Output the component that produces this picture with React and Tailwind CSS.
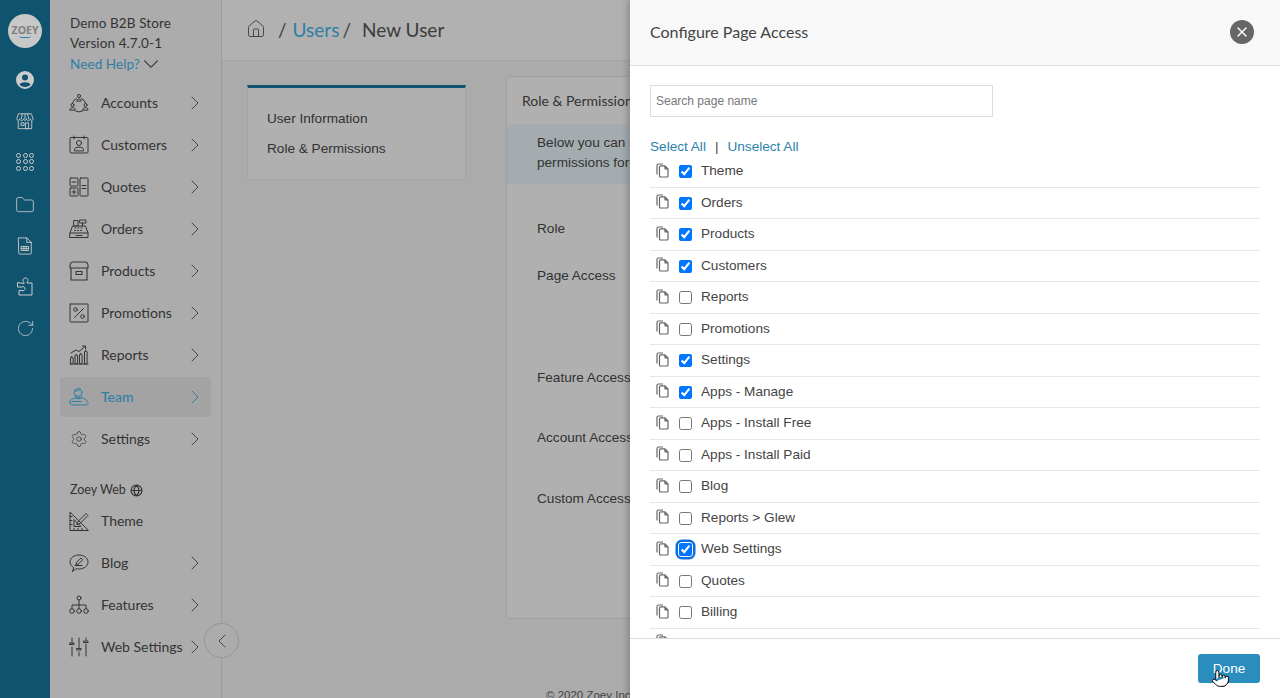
import React from 'react';
import { ChevronRight, ChevronDown, ChevronLeft, House, Folder, RotateCw, X, Settings as Gear, Pointer } from 'lucide-react';

const nav = "font-['Lato','Open_Sans',sans-serif]";

const Ico = ({ children, size = 20, className = '', strokeWidth = 1 }) => (
  <svg width={size} height={size} viewBox="0 0 20 20" fill="none" stroke="currentColor" strokeWidth={strokeWidth} strokeLinecap="round" strokeLinejoin="round" className={className}>
    {children}
  </svg>
);

const iconos = {
  accounts: <Ico><circle cx="10" cy="3" r="1.6" /><path d="M8 7.500c0-2 4-2 4 0v.6H8z" /><circle cx="3.500" cy="12" r="1.500" /><path d="M1 16.500c0-2.600 5-2.600 5 0v.6H1z" /><circle cx="16.500" cy="12" r="1.500" /><path d="M14 16.500c0-2.600 5-2.600 5 0v.6h-5z" /><path d="M7.500 5.500a7 7 0 0 0-4 4.400M12.500 5.500a7 7 0 0 1 4 4.400M6.500 18a7 7 0 0 0 7 0" /></Ico>,
  customers: <Ico><rect x="1" y="2.500" width="18" height="15.500" rx="1" /><path d="M5 1v3M15 1v3" /><circle cx="10" cy="8" r="2.500" /><path d="M5.500 15.500v-1c0-1.500 2-2.300 4.500-2.300s4.500.8 4.500 2.300v1z" /></Ico>,
  quotes: <Ico><rect x="1" y="1" width="8" height="8" rx=".8" /><rect x="1" y="11" width="8" height="8" rx=".8" /><rect x="11" y="1" width="8" height="18" rx=".8" /><path d="M3 5h4M3 15h4M5 13v4M13 8.500h4M13 11.500h4" /></Ico>,
  orders: <Ico><path d="M1 14 3.500 7h13L19 14v4.500H1zM1 14h18" /><rect x="5" y="1.500" width="4" height="5.500" /><rect x="11" y="1" width="6" height="3" /><path d="M13.500 4v3M6 9h1M9 9h1M12 9h1M5.500 11.500h1M8.500 11.500h1M11.500 11.500h1M7 16.500h6" /></Ico>,
  products: <Ico strokeWidth={1.100}><path d="M1 7V4.500C1 2.500 2.500 1 4.500 1h11C17.500 1 19 2.500 19 4.500V7zM2 7v12h16V7" /><path d="M7 10.500h6v3H7z" /></Ico>,
  promotions: <Ico><rect x="1" y="1" width="18" height="18" rx=".6" /><path d="m5.500 14.500 9-9" /><circle cx="6.500" cy="6.500" r="1.800" /><circle cx="13.500" cy="13.500" r="1.800" /></Ico>,
  reports: <Ico><path d="M1 19h18" /><rect x="1.500" y="12" width="2.600" height="7" rx="1" /><rect x="6" y="10" width="2.600" height="9" rx="1" /><rect x="10.500" y="9" width="2.600" height="10" rx="1" /><rect x="15.500" y="6" width="2.600" height="13" rx="1" /><path d="m2 8 5-3 3 1.500L16 1.500M13.500 1H16.500V4" /></Ico>,
  team: <Ico><circle cx="9" cy="5.500" r="3.800" /><path d="M5.500 3.500C8 4.500 10 4 11 1.800M6 9.500c2 1.500 5 1.500 7 0" /><path d="M1 15c0-2.500 3-3.500 6-4 1.500 1 4 1 5.500 0 3 .5 6.500 2 6.500 5.500 0 1-1 1.500-2 1.500H5c-2.500 0-4-1-4-3z" /><path d="M3.500 14.500h9" /></Ico>,
  theme: <Ico size={21}><path d="M1 1v18h18z" /><path d="M5 8.500V15h6.500z" /><path d="M1 5h2M1 9h2M1 13h2M5 19v-2M9 19v-2M13 19v-2" /><path d="m9 10 8-8 2 2-8 8-3 1z" /></Ico>,
  blog: <Ico><path d="M4.500 14.500C2.500 13.300 1 11.300 1 9c0-4 4-7 9-7s9 3 9 7-4 7-9 7c-1 0-2-.1-2.800-.4L3.500 18.500z" /><path d="m7 11.500.6-2.300L12 5l1.800 1.800L9.300 11z" /><path d="M6 12.500h7" /></Ico>,
  features: <Ico><circle cx="10" cy="3" r="2" /><circle cx="3" cy="16" r="2.300" /><circle cx="10" cy="16" r="2.300" /><circle cx="17" cy="16" r="2.300" /><path d="M10 5v8.700M3 13.700V10h14v3.700" /></Ico>,
  web: <Ico><path d="M3 1v5M3 10v9M10 1v10M10 15v4M17 1v2M17 7v12" /><path d="M1 6h4v1.500H1zM8 11.500h4V13H8zM15 4h4v1.500h-4z" /></Ico>,
};

const MENU = [
  { t: 'Accounts', i: 'accounts' },
  { t: 'Customers', i: 'customers' },
  { t: 'Quotes', i: 'quotes' },
  { t: 'Orders', i: 'orders' },
  { t: 'Products', i: 'products' },
  { t: 'Promotions', i: 'promotions' },
  { t: 'Reports', i: 'reports' },
  { t: 'Team', i: 'team', activo: true },
  { t: 'Settings', i: 'settings' },
];

const MENU_WEB = [
  { t: 'Theme', i: 'theme', sinFlecha: true },
  { t: 'Blog', i: 'blog' },
  { t: 'Features', i: 'features' },
  { t: 'Web Settings', i: 'web' },
];

const PAGINAS = [
  ['Theme', true], ['Orders', true], ['Products', true], ['Customers', true], ['Reports', false],
  ['Promotions', false], ['Settings', true], ['Apps - Manage', true], ['Apps - Install Free', false],
  ['Apps - Install Paid', false], ['Blog', false], ['Reports > Glew', false], ['Web Settings', true, true],
  ['Quotes', false], ['Billing', false],
];

const ItemMenu = ({ item }) => (
  <div className="h-[42px] flex items-center">
    <div className={`h-[40px] w-[151px] ml-[10px] pl-[9px] flex items-center rounded ${item.activo ? 'bg-[#cccccc] text-[#3b9fcf]' : 'text-[#424242]'}`}>
      <span className="w-[20px] flex justify-center shrink-0">
        {item.i === 'settings' ? <Gear size={18} strokeWidth={1} /> : iconos[item.i]}
      </span>
      <span className={`ml-[12px] -mt-[2px] text-[14px] tracking-[0px] flex-1 whitespace-nowrap ${item.activo ? 'font-medium' : ''}`}>{item.t}</span>
      {!item.sinFlecha && <ChevronRight size={24} strokeWidth={1} className={`shrink-0 mr-[4px] ${item.activo ? '' : 'text-[#555]'}`} />}
    </div>
  </div>
);

const Rail = () => (
  <div className="w-[50px] shrink-0 bg-[#15688b] flex flex-col items-center text-white">
    <div className="w-[34px] h-[34px] mt-[14px] rounded-full bg-[#fbfbfb] flex flex-col items-center justify-center">
      <span className="text-[10.500px] leading-[10px] font-bold text-[#a0a0a0] font-['Open_Sans',sans-serif]">ZOEY</span>
      <span className="w-[12px] h-[3px] border-b border-[#3b9fcf] rounded-b-full"></span>
    </div>
    <div className="h-[41px] mt-[11px] flex items-center justify-center">
      <svg width="18" height="18" viewBox="0 0 18 18" fill="currentColor">
        <path fillRule="evenodd" d="M9 0a9 9 0 1 1 0 18A9 9 0 0 1 9 0zm0 3.400a3 3 0 1 0 0 6 3 3 0 0 0 0-6zM3.500 13.400c1 1.500 3.200 2.500 5.500 2.500s4.500-1 5.500-2.500c-.8-1.400-3-2.200-5.500-2.200s-4.700.8-5.500 2.200z" />
      </svg>
    </div>
    <div className="h-[41px] flex items-center justify-center">
      <Ico size={18}>
        <path d="M3 2h14l2 5.500c0 2.500-3 2.500-3 0 0 2.500-4.500 2.500-4.500 0 0 2.500-3 2.500-3 0 0 2.500-4.500 2.500-4.500 0 0 2.500-3 2.500-3 0zM2.500 10v8.500h15V10M7 2 6 7.500M13 2l1 5.500M10 2v5.500" />
        <path d="M6 12h3v3H6zM11 12h3v6.500h-3z" />
      </Ico>
    </div>
    <div className="h-[41px] flex items-center justify-center">
      <div className="grid grid-cols-3 gap-[1.500px]">
        {Array.from({ length: 9 }).map((_, i) => (
          <span key={i} className="w-[5px] h-[5px] rounded-full border border-white"></span>
        ))}
      </div>
    </div>
    <div className="h-[46px] flex items-center justify-center"><Folder size={20} strokeWidth={1} /></div>
    <div className="h-[36px] flex items-center justify-center">
      <Ico size={18}>
        <path d="M3 1h9l5 5v12a1 1 0 0 1-1 1H4a1 1 0 0 1-1-1z" />
        <path d="M12 1v5h5M6 10.500h8v4.500H6zM6 12.700h8M8.700 10.500V15M11.300 10.500V15" />
      </Ico>
    </div>
    <div className="h-[45px] flex items-center justify-center">
      <Ico size={20}>
        <path d="M9 6V5c-1.500-.5-1.500-4 1.500-4s3 3.500 1.500 4v1h5v12H4v-4.500h3c1.500 1 3-.5 3-1.800 0-1.500-1.500-2.700-3-1.700H2.500V6z" />
      </Ico>
    </div>
    <div className="h-[38px] flex items-center justify-center"><RotateCw size={19} strokeWidth={1} /></div>
  </div>
);

const Sidebar = () => (
  <div className={`w-[172px] shrink-0 bg-[#d8d8d8] border-r border-[#c4c4c4] ${nav}`}>
    <div className="h-[82px] pl-[20px] pt-[13px] text-[13.500px] text-[#424242] leading-[20px] tracking-[.1px]">
      <div>Demo B2B Store</div>
      <div>Version 4.7.0-1</div>
      <div className="text-[#3b9fcf] flex items-center mt-[1px]">
        Need Help? <ChevronDown size={26} strokeWidth={1} className="text-[#555] -my-[4px] -ml-[2px]" />
      </div>
    </div>
    {MENU.map((m) => <ItemMenu key={m.t} item={m} />)}
    <div className="h-[40px] pl-[20px] pt-[20px] flex items-center gap-[4px] text-[12.500px] text-[#424242]">
      Zoey Web
      <svg width="13" height="13" viewBox="0 0 12 12" fill="none" stroke="currentColor" strokeWidth="1.100"><circle cx="6" cy="6" r="5" /><path d="M1 6h10M6 1c-3 3-3 7 0 10M6 1c3 3 3 7 0 10" /></svg>
    </div>
    {MENU_WEB.map((m) => <ItemMenu key={m.t} item={m} />)}
  </div>
);

const FilaAcceso = ({ children, h }) => (
  <div className={`pl-[30px] text-[13.600px] text-[#404040] whitespace-nowrap ${h}`}>{children}</div>
);

const Principal = () => (
  <div className="flex-1 min-w-0 flex flex-col bg-[#d6d6d6] font-['Liberation_Sans',sans-serif]">
    <header className={`h-[61px] shrink-0 bg-[#dedede] border-b border-[#cdcdcd] pl-[24px] flex items-center text-[19px] text-[#4d4d4d] ${nav}`}>
      <House size={20} strokeWidth={1.100} className="mr-[12px] -mt-[3px]" />
      <span className="mr-[6px]">/</span>
      <span className="text-[#3b9fcf]">Users</span>
      <span className="ml-[3px] mr-[11px]">/</span>
      <span>New User</span>
    </header>
    <div className="flex-1 flex gap-[40px] pl-[25px]">
      <div className="w-[219px] shrink-0 h-[95px] mt-[24px] bg-[#dcdcdc] border border-[#cdcdcd] border-t-[3px] border-t-[#15688b] rounded-b pt-[16px] pl-[19px] text-[13.600px] leading-[30px] text-[#404040]">
        <div>User Information</div>
        <div>Role &amp; Permissions</div>
      </div>
      <div className="flex-1 h-[543px] mt-[15px] mr-[25px] bg-[#dcdcdc] border border-[#c8c8c8] rounded">
        <div className={`h-[47px] flex items-center pl-[15px] text-[14px] text-[#424242] whitespace-nowrap ${nav}`}>Role &amp; Permissions</div>
        <div className="h-[60px] bg-[#ced8dc] pl-[30px] pt-[9px] text-[13.600px] leading-[20px] text-[#404040] whitespace-nowrap mb-[35px]">
          <div>Below you can select a role and</div>
          <div>permissions for this user</div>
        </div>
        <FilaAcceso h="h-[47px]">Role</FilaAcceso>
        <FilaAcceso h="h-[102px]">Page Access</FilaAcceso>
        <FilaAcceso h="h-[60px]">Feature Access</FilaAcceso>
        <FilaAcceso h="h-[61px]">Account Access</FilaAcceso>
        <FilaAcceso h="h-[30px]">Custom Access</FilaAcceso>
      </div>
    </div>
    <div className="h-[10px] shrink-0 pl-[324px] text-[11.500px] leading-[14px] text-[#555] whitespace-nowrap overflow-hidden">© 2020 Zoey Inc. All rights reserved.</div>
  </div>
);

// hoja doble con esquina doblada
const IconoCopia = () => (
  <svg width="13" height="15" viewBox="0 0 13 15" fill="none" stroke="#666" strokeWidth="1.200" strokeLinejoin="round" className="ml-[6px] -mt-[2px] shrink-0">
    <path d="M1 11.500V2.500C1 1.500 1.500 1 2.500 1H7" />
    <path d="M3.500 4c0-.8.4-1.200 1.200-1.200H9l3 3v7.200c0 .6-.4 1-1 1H4.500c-.6 0-1-.4-1-1zM9 2.800v3h3" />
  </svg>
);

const FilaPagina = ({ pagina }) => {
  const [nombre, marcado, foco] = pagina;
  return (
    <div className="h-[31.500px] shrink-0 flex items-center border-b border-[#e6e6e6] text-[13.600px] text-[#444]">
      <IconoCopia />
      <span className={`ml-[10px] mt-[1px] flex rounded-[3px] ${foco ? 'ring-[2.500px] ring-[#0a6ee0] ring-offset-1' : ''}`}>
        <input type="checkbox" defaultChecked={marcado} className="w-[13px] h-[13px] m-0" />
      </span>
      <span className="ml-[9px]">{nombre}</span>
    </div>
  );
};

const PanelAcceso = () => (
  <div className="absolute top-0 right-0 bottom-0 w-[650px] bg-white flex flex-col shadow-[-3px_0_6px_rgba(0,0,0,0.2)] font-['Liberation_Sans',sans-serif]">
    <div className="h-[66px] shrink-0 bg-[#f8f8f8] border-b border-[#dcdcdc] flex items-center justify-between pl-[20px] pr-[26px] pb-[1px]">
      <span className={`text-[16px] text-[#444] ${nav}`}>Configure Page Access</span>
      <span className="w-[24px] h-[24px] rounded-full bg-[#666] flex items-center justify-center text-white">
        <X size={16} strokeWidth={2} />
      </span>
    </div>
    <div className="flex-1 min-h-0 px-[20px] pt-[19px] overflow-hidden flex flex-col">
      <input
        placeholder="Search page name"
        className="w-[343px] h-[32px] shrink-0 border border-[#ddd] px-[5px] text-[12px] text-[#555] placeholder:text-[#777]"
      />
      <div className="mt-[20px] h-[19px] shrink-0 text-[13.600px] leading-[19px] text-[#2b83ab] flex">
        <span>Select All</span>
        <span className="text-[#444] mx-[9px]">|</span>
        <span>Unselect All</span>
      </div>
      <div className="flex flex-col">
        {PAGINAS.map((p) => <FilaPagina key={p[0]} pagina={p} />)}
        <div className="pt-[7px] shrink-0"><IconoCopia /></div>
      </div>
    </div>
    <div className="h-[60px] shrink-0 border-t border-[#dcdcdc] bg-white flex justify-end items-start pt-[15px] pr-[20px] relative">
      <button className="w-[62px] h-[29px] pt-[1px] bg-[#2b8dbd] rounded-[3px] text-white text-[13.600px]">Done</button>
      <Pointer size={19} strokeWidth={1.200} fill="white" className="absolute left-[581px] top-[30px] text-black" />
    </div>
  </div>
);

export default function App() {
  return (
    <div className="relative w-[1280px] h-[698px] overflow-hidden flex">
      <Rail />
      <Sidebar />
      <Principal />
      <button className="absolute left-[204px] top-[623px] w-[35px] h-[35px] rounded-full border border-[#bbb] bg-[#d8d8d8] flex items-center justify-center text-[#555]">
        <ChevronLeft size={24} strokeWidth={1} />
      </button>
      <div className="absolute inset-0 bg-black/20"></div>
      <PanelAcceso />
    </div>
  );
}
